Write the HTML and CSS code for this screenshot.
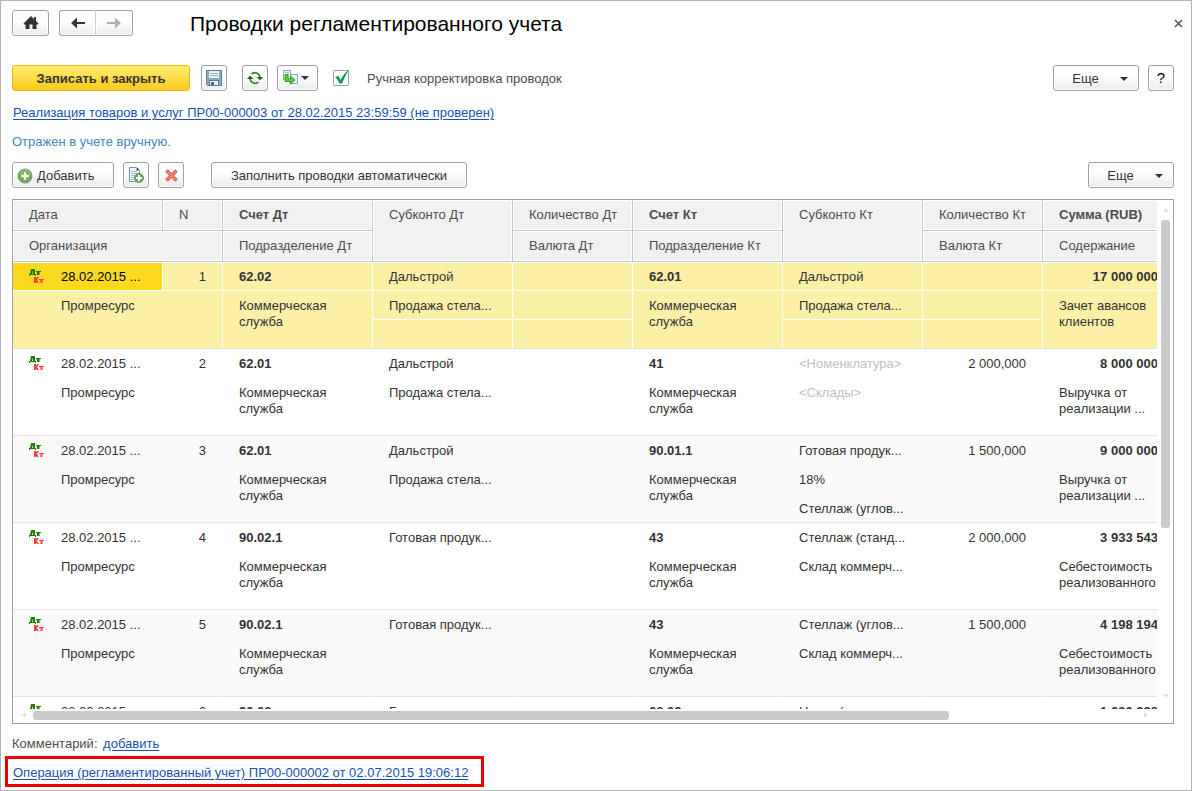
FILE: index.html
```html
<!DOCTYPE html>
<html lang="ru">
<head>
<meta charset="utf-8">
<title>Проводки регламентированного учета</title>
<link rel="stylesheet" href="styles.css">
</head>
<body>
<svg class="defs" aria-hidden="true">
  <symbol id="dtkt" viewBox="0 0 16 16">
    <g fill="#1f7a00"><path d="M0 5h7v2H6V6H1v1H0z"/><path d="M2 0h4v6H4V1.500L3 5H1z"/><path d="M7 2h5v1h-1.500v3H8V3H7z"/></g>
    <g fill="#ff4040"><path d="M5 8h2v6H5zM8 8h2L8 11l2 3H8l-2-3zM10 10h5v1h-1.500v3h-2v-3H10z"/></g>
  </symbol>
</svg>
<main class="form">
  <header class="titlebar">
    <button class="btn home" aria-label="Начало"><svg width="16" height="14" viewBox="0 0 16 14"><path fill="#333" d="M8 0l3 3V1h2v4l2.500 2.500L15 8.500h-1.500V13h-4V8.500h-3V13h-4V8.500H1L.5 7.500z"/></svg></button>
    <div class="nav">
      <button class="btn" aria-label="Назад"><svg width="16" height="12" viewBox="0 0 16 12"><path fill="#333" d="M1 6l6-5.500V5h8v2H7v4.500z"/></svg></button>
      <button class="btn" aria-label="Вперед"><svg width="16" height="12" viewBox="0 0 16 12"><path fill="#b0b0b0" d="M15 6L9 .5V5H1v2h8v4.500z"/></svg></button>
    </div>
    <h1>Проводки регламентированного учета</h1>
    <button class="close" aria-label="Закрыть"><svg width="9" height="9" viewBox="0 0 9 9"><path d="M1 1l7 7M8 1L1 8" stroke="#555" stroke-width="1.500"/></svg></button>
  </header>

  <div class="bar commands">
    <button class="btn primary">Записать и закрыть</button>
    <button class="btn icon save" aria-label="Записать"><svg width="16" height="16" viewBox="0 0 16 16"><path fill="#8faabd" stroke="#5f7f96" d="M.5.500h15v15h-14l-1-1z"/><path fill="#e9f3fa" d="M3 1h10v7H3z"/><path stroke="#9db7c8" d="M4 3.500h8M4 5.500h8"/><path fill="#5b788e" d="M3 10h10v5H3z"/><path fill="#eef3f6" d="M4 11h8v4H4z"/><path fill="#46637a" d="M5 12h3v3H5z"/></svg></button>
    <button class="btn icon refresh" aria-label="Обновить"><svg width="16" height="14" viewBox="0 0 16 14"><path fill="none" stroke="#2f7d14" stroke-width="1.600" d="M4.500 3A5 5 0 0 1 12.800 6M11.500 11A5 5 0 0 1 3.200 8"/><path fill="#236b0c" d="M9.500 6H16l-3 3.500zM0 8h6.500L3 4.500z"/></svg></button>
    <button class="btn create" aria-label="Создать на основании"><svg width="17" height="16" viewBox="0 0 17 16"><path fill="#eaf3f8" stroke="#83a9bd" d="M1.500.500h7v9h-7z"/><path stroke="#9dbdcc" d="M3 2.500h4M3 4.500h4M3 6.500h4"/><path fill="#eaf3f8" stroke="#83a9bd" d="M8.500 4.500h7v9h-7z"/><path fill="#59cf2c" stroke="#229016" stroke-width=".8" d="M3 4.500h3v4h2.500V6L13 10l-4.500 4v-2.500H3z"/></svg><svg class="caret" width="8" height="4" viewBox="0 0 8 4"><path fill="#333" d="M0 0h8L4 4z"/></svg></button>
    <label class="check"><span class="tick"><input type="checkbox" checked><svg width="16" height="16" viewBox="0 0 16 16"><path fill="#009b45" d="M1 8l3.500-1 2 4C8.500 7 11 4 15.500 0 12.500 4.500 10 9.500 8 14.500H5.500C4.500 12 3 9.500 1 8z"/></svg></span><span class="caption">Ручная корректировка проводок</span></label>
    <button class="btn more push">Еще<svg class="caret" width="8" height="4" viewBox="0 0 8 4"><path fill="#333" d="M0 0h8L4 4z"/></svg></button>
    <button class="btn icon help">?</button>
  </div>

  <p class="source"><a href="#">Реализация товаров и услуг ПР00-000003 от 28.02.2015 23:59:59 (не проверен)</a></p>
  <p class="note">Отражен в учете вручную.</p>

  <div class="bar">
    <button class="btn add"><svg width="16" height="16" viewBox="0 0 16 16"><circle cx="8" cy="8" r="7" fill="#69ac50" stroke="#789879"/><path fill="none" stroke="#a6d094" d="M3 7a5 5 0 0 1 10 0"/><path stroke="#fff" stroke-width="2.400" d="M8 4v8M4 8h8"/></svg>Добавить</button>
    <button class="btn icon copy" aria-label="Скопировать"><svg width="16" height="16" viewBox="0 0 16 16"><path fill="#f0f6fa" stroke="#7896aa" d="M1.500.500h7l3 3v11h-10z"/><path stroke="#a2bac9" d="M3 4.500h6M3 6.500h6M3 8.500h4M3 10.500h3M3 12.500h3M8.500.500v3h3"/><circle cx="11" cy="11" r="4.500" fill="#69ac50" stroke="#6f9670"/><path stroke="#fff" stroke-width="2" d="M11 8v6M8 11h6"/></svg></button>
    <button class="btn icon del" aria-label="Удалить"><svg width="13" height="13" viewBox="0 0 13 13"><path stroke="#d94a3e" stroke-width="3.400" d="M1.500 1.500l10 10M11.500 1.500l-10 10"/><path stroke="#f5816f" stroke-width="1.800" d="M2 2l9 9M11 2l-9 9"/></svg></button>
    <button class="btn fill">Заполнить проводки автоматически</button>
    <button class="btn more push">Еще<svg class="caret" width="8" height="4" viewBox="0 0 8 4"><path fill="#333" d="M0 0h8L4 4z"/></svg></button>
  </div>

  <section class="grid">
    <div class="view">
      <table>
        <colgroup><col class="w150"><col class="w60"><col class="w150"><col class="w140"><col class="w120"><col class="w150"><col class="w140"><col class="w120"><col class="w150"></colgroup>
        <thead>
          <tr><th>Дата</th><th>N</th><th class="b">Счет Дт</th><th rowspan="2">Субконто Дт</th><th>Количество Дт</th><th class="b">Счет Кт</th><th rowspan="2">Субконто Кт</th><th>Количество Кт</th><th class="b">Сумма (RUB)</th></tr>
          <tr><th colspan="2">Организация</th><th>Подразделение Дт</th><th>Валюта Дт</th><th>Подразделение Кт</th><th>Валюта Кт</th><th>Содержание</th></tr>
        </thead>
        <tbody class="selected">
          <tr><td class="date current"><svg class="dk"><use href="#dtkt"/></svg>28.02.2015 ...</td><td class="num">1</td><td class="b">62.02</td><td>Дальстрой</td><td></td><td class="b">62.01</td><td>Дальстрой</td><td></td><td class="num b">17 000 000,00</td></tr>
          <tr><td class="org" colspan="2" rowspan="2">Промресурс</td><td rowspan="2">Коммерческая служба</td><td>Продажа стела...</td><td></td><td rowspan="2">Коммерческая служба</td><td>Продажа стела...</td><td></td><td rowspan="2">Зачет авансов клиентов</td></tr>
          <tr><td></td><td></td><td></td><td></td></tr>
        </tbody>
        <tbody>
          <tr><td class="date"><svg class="dk"><use href="#dtkt"/></svg>28.02.2015 ...</td><td class="num">2</td><td class="b">62.01</td><td>Дальстрой</td><td></td><td class="b">41</td><td class="empty">&lt;Номенклатура&gt;</td><td class="num">2 000,000</td><td class="num b">8 000 000,00</td></tr>
          <tr><td class="org" colspan="2" rowspan="2">Промресурс</td><td rowspan="2">Коммерческая служба</td><td>Продажа стела...</td><td></td><td rowspan="2">Коммерческая служба</td><td class="empty">&lt;Склады&gt;</td><td></td><td rowspan="2">Выручка от реализации ...</td></tr>
          <tr><td></td><td></td><td></td><td></td></tr>
        </tbody>
        <tbody class="odd">
          <tr><td class="date"><svg class="dk"><use href="#dtkt"/></svg>28.02.2015 ...</td><td class="num">3</td><td class="b">62.01</td><td>Дальстрой</td><td></td><td class="b">90.01.1</td><td>Готовая продук...</td><td class="num">1 500,000</td><td class="num b">9 000 000,00</td></tr>
          <tr><td class="org" colspan="2" rowspan="2">Промресурс</td><td rowspan="2">Коммерческая служба</td><td>Продажа стела...</td><td></td><td rowspan="2">Коммерческая служба</td><td>18%</td><td></td><td rowspan="2">Выручка от реализации ...</td></tr>
          <tr><td></td><td></td><td>Стеллаж (углов...</td><td></td></tr>
        </tbody>
        <tbody>
          <tr><td class="date"><svg class="dk"><use href="#dtkt"/></svg>28.02.2015 ...</td><td class="num">4</td><td class="b">90.02.1</td><td>Готовая продук...</td><td></td><td class="b">43</td><td>Стеллаж (станд...</td><td class="num">2 000,000</td><td class="num b">3 933 543,00</td></tr>
          <tr><td class="org" colspan="2" rowspan="2">Промресурс</td><td rowspan="2">Коммерческая служба</td><td></td><td></td><td rowspan="2">Коммерческая служба</td><td>Склад коммерч...</td><td></td><td rowspan="2">Себестоимость реализованного</td></tr>
          <tr><td></td><td></td><td></td><td></td></tr>
        </tbody>
        <tbody class="odd">
          <tr><td class="date"><svg class="dk"><use href="#dtkt"/></svg>28.02.2015 ...</td><td class="num">5</td><td class="b">90.02.1</td><td>Готовая продук...</td><td></td><td class="b">43</td><td>Стеллаж (углов...</td><td class="num">1 500,000</td><td class="num b">4 198 194,00</td></tr>
          <tr><td class="org" colspan="2" rowspan="2">Промресурс</td><td rowspan="2">Коммерческая служба</td><td></td><td></td><td rowspan="2">Коммерческая служба</td><td>Склад коммерч...</td><td></td><td rowspan="2">Себестоимость реализованного</td></tr>
          <tr><td></td><td></td><td></td><td></td></tr>
        </tbody>
        <tbody>
          <tr><td class="date"><svg class="dk"><use href="#dtkt"/></svg>28.02.2015 ...</td><td class="num">6</td><td class="b">90.03</td><td>Готовая продук...</td><td></td><td class="b">68.02</td><td>Налог (начис...</td><td></td><td class="num b">1 220 338,00</td></tr>
        </tbody>
      </table>
    </div>
    <div class="vscroll">
      <svg width="6" height="4" viewBox="0 0 6 4"><path fill="#e0e0e0" d="M0 4h6L3 0z"/></svg>
      <div class="track"><div class="thumb"></div></div>
      <svg width="6" height="4" viewBox="0 0 6 4"><path fill="#e0e0e0" d="M0 0h6L3 4z"/></svg>
    </div>
    <div class="hscroll">
      <svg width="4" height="6" viewBox="0 0 4 6"><path fill="#e0e0e0" d="M4 0v6L0 3z"/></svg>
      <div class="track"><div class="thumb"></div></div>
      <svg width="4" height="6" viewBox="0 0 4 6"><path fill="#e0e0e0" d="M0 0v6l4-3z"/></svg>
    </div>
  </section>

  <p class="comment">Комментарий: <a href="#">добавить</a></p>
  <p class="operation"><a href="#">Операция (регламентированный учет) ПР00-000002 от 02.07.2015 19:06:12</a></p>
</main>
</body>
</html>
```
FILE: styles.css
```css
* { box-sizing: border-box; }

body {
  margin: 0;
  font: 13px/16px "Liberation Sans", Arial, sans-serif;
  color: #333;
  background: #fff;
}

p, h1 { margin: 0; }

.defs { display: none; }

.form {
  display: flex;
  flex-direction: column;
  height: 100vh;
  padding: 9px 17px 3px 11px;
  border: 1px solid #b4b4b4;
}

a { color: #1a50b4; text-underline-offset: 2px; }

/* Buttons */
.btn {
  display: inline-flex;
  align-items: center;
  justify-content: center;
  height: 26px;
  padding: 1px 0 0;
  border: 1px solid #a0a0a0;
  border-radius: 3px;
  background: linear-gradient(#fff, #fff 40%, #eaeaea);
  box-shadow: inset 0 0 0 1px #fff;
  font: inherit;
  color: #333;
}

.icon { width: 26px; padding: 0; }

.primary {
  width: 178px;
  border-color: #f0b41e;
  background: linear-gradient(#ffee70, #fbcb1c);
  box-shadow: none;
  font-weight: bold;
}

.save { margin-left: 11px; }
.refresh { margin-left: 15px; }
.create { width: 41px; margin-left: 9px; padding: 0 5px 0 0; gap: 2px; }
.more { width: 86px; padding-left: 8px; gap: 21px; }
.push { margin-left: auto; }
.help { margin-left: 9px; font-size: 15px; color: #000; }
.add { width: 102px; padding-left: 4px; gap: 4px; justify-content: flex-start; }
.copy, .del { margin-left: 9px; }
.fill { width: 256px; margin-left: 27px; }

/* Title bar */
.titlebar {
  display: flex;
  align-items: center;
  margin: 0 -9px 29px 0;
}

.home { width: 37px; padding: 0; }
.nav { display: flex; margin-left: 10px; }
.nav .btn { width: 37px; padding: 0; }
.nav .btn:first-child { border-radius: 3px 0 0 3px; border-right-color: #ccc; }
.nav .btn:last-child { border-radius: 0 3px 3px 0; border-left: 0; }

h1 {
  margin-left: 57px;
  padding-top: 2px;
  font-size: 21px;
  line-height: 24px;
  font-weight: normal;
  color: #000;
}

.close {
  display: flex;
  margin-left: auto;
  padding: 0;
  border: 0;
  background: none;
}

.bar { display: flex; align-items: center; }

/* Manual correction tick box */
.check {
  display: flex;
  align-items: center;
  gap: 18px;
  margin-left: 15px;
  color: #4d4d4d;
}

.caption { padding-top: 2px; }

.tick { position: relative; display: flex; }

.tick input {
  appearance: none;
  width: 16px;
  height: 16px;
  margin: 0;
  border: 1px solid #a0a0a0;
  border-radius: 2px;
  background: #fff;
}

.tick svg { position: absolute; left: 1px; top: -1px; pointer-events: none; }

.source { margin-top: 14px; padding-left: 1px; }
.note { margin: 13px 0 12px; color: #4a86b8; }

/* Postings table */
.grid {
  display: grid;
  grid-template-columns: minmax(0, 1fr) 16px;
  grid-template-rows: minmax(0, 1fr) 14px;
  flex: 1;
  min-height: 0;
  margin-top: 11px;
  border: 1px solid #a0a0a0;
}

.view { overflow: hidden; }

table {
  width: 1180px;
  table-layout: fixed;
  border-collapse: separate;
  border-spacing: 0;
}

.w60 { width: 60px; }
.w120 { width: 120px; }
.w140 { width: 140px; }
.w150 { width: 150px; }

th {
  height: 31px;
  padding: 7px 8px 7px 16px;
  border: solid #c6c6c6;
  border-width: 0 1px 1px 0;
  background: #f1f1f1;
  box-shadow: inset 0 0 0 1px #fff;
  font-weight: normal;
  text-align: left;
  vertical-align: top;
  white-space: nowrap;
  color: #4d4d4d;
}

td {
  height: 29px;
  padding: 7px 16px 5px;
  border: solid transparent;
  border-width: 0 1px 1px 0;
  vertical-align: top;
}

.b { font-weight: bold; }
.num { text-align: right; white-space: nowrap; }
.empty { color: #c0c0c0; }
.date { white-space: nowrap; }
.org { padding-left: 48px; }

.dk {
  width: 16px;
  height: 16px;
  margin-right: 16px;
  vertical-align: top;
}

.odd td { background: #fafafa; }
.selected td { background: #fcf0a6; border-color: #fff; }
.selected tr:first-child td { box-shadow: inset 0 1px #fff; }
.selected .current { background: #fbd91f; color: #000; }
tbody tr:last-child td, tbody td[rowspan] { border-bottom-color: #e3e3e3; }
tbody:last-child td { border-bottom-color: transparent; }

/* Scroll bars */
.vscroll, .hscroll { display: flex; align-items: center; }
.vscroll { flex-direction: column; padding: 8px 0 11px 1px; gap: 8px; }
.hscroll { padding: 0 9px 2px; gap: 7px; }
.track { flex: 1; }
.thumb { border-radius: 3px; background: #cacaca; }
.vscroll .thumb { width: 9px; height: 66%; }
.hscroll .thumb { width: 83%; height: 9px; }

/* Footer */
.comment { margin-top: 12px; color: #4d4d4d; }
.comment a { margin-left: 2px; }

.operation {
  align-self: flex-start;
  margin: 4px 0 0 -7px;
  padding: 6px 13px 3px 5px;
  border: 3px solid #f00000;
}
```
